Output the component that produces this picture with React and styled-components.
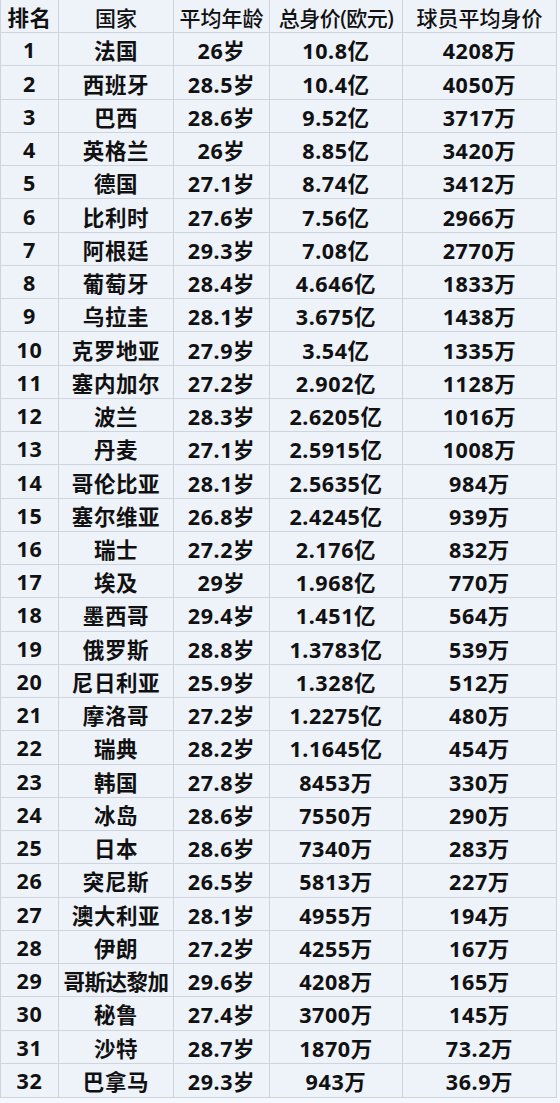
import React from 'react';
import styled, { createGlobalStyle } from 'styled-components';

// 2018 世界杯 32强 身价表

const GlobalStyle = createGlobalStyle`
  html, body {
    margin: 0;
    padding: 0;
    background: #f4f7fb;
  }
  body {
    font-family: "Noto Sans", "Noto Sans CJK SC", sans-serif;
  }
`;

const Table = styled.div`
  width: 557px;
  height: 1098px;
  box-sizing: border-box;
  border-left: 1px solid #cdd4de;
  border-bottom: 1px solid #cdd4de;
  background: #eef2f9;
  display: grid;
  grid-template-rows: repeat(33, 1fr);
`;

const Row = styled.div`
  display: grid;
  grid-template-columns: 58px 115px 96px 133px 154px;
`;

const Cell = styled.div`
  box-sizing: border-box;
  border-right: 1px solid #cdd4de;
  border-bottom: ${(p) => (p.$last ? 'none' : '1px solid #cdd4de')};
  display: flex;
  align-items: center;
  justify-content: center;
  font-size: ${(p) => (p.$head ? '21px' : '21.5px')};
  font-weight: ${(p) => (p.$head ? 500 : 700)};
  color: #111;
  white-space: nowrap;
  letter-spacing: ${(p) => (p.$tight ? '-0.5px' : p.$head ? '0' : '0.6px')};
  padding-top: 1px;
`;

const rows = [
  ['1', '法国', '26岁', '10.8亿', '4208万'],
  ['2', '西班牙', '28.5岁', '10.4亿', '4050万'],
  ['3', '巴西', '28.6岁', '9.52亿', '3717万'],
  ['4', '英格兰', '26岁', '8.85亿', '3420万'],
  ['5', '德国', '27.1岁', '8.74亿', '3412万'],
  ['6', '比利时', '27.6岁', '7.56亿', '2966万'],
  ['7', '阿根廷', '29.3岁', '7.08亿', '2770万'],
  ['8', '葡萄牙', '28.4岁', '4.646亿', '1833万'],
  ['9', '乌拉圭', '28.1岁', '3.675亿', '1438万'],
  ['10', '克罗地亚', '27.9岁', '3.54亿', '1335万'],
  ['11', '塞内加尔', '27.2岁', '2.902亿', '1128万'],
  ['12', '波兰', '28.3岁', '2.6205亿', '1016万'],
  ['13', '丹麦', '27.1岁', '2.5915亿', '1008万'],
  ['14', '哥伦比亚', '28.1岁', '2.5635亿', '984万'],
  ['15', '塞尔维亚', '26.8岁', '2.4245亿', '939万'],
  ['16', '瑞士', '27.2岁', '2.176亿', '832万'],
  ['17', '埃及', '29岁', '1.968亿', '770万'],
  ['18', '墨西哥', '29.4岁', '1.451亿', '564万'],
  ['19', '俄罗斯', '28.8岁', '1.3783亿', '539万'],
  ['20', '尼日利亚', '25.9岁', '1.328亿', '512万'],
  ['21', '摩洛哥', '27.2岁', '1.2275亿', '480万'],
  ['22', '瑞典', '28.2岁', '1.1645亿', '454万'],
  ['23', '韩国', '27.8岁', '8453万', '330万'],
  ['24', '冰岛', '28.6岁', '7550万', '290万'],
  ['25', '日本', '28.6岁', '7340万', '283万'],
  ['26', '突尼斯', '26.5岁', '5813万', '227万'],
  ['27', '澳大利亚', '28.1岁', '4955万', '194万'],
  ['28', '伊朗', '27.2岁', '4255万', '167万'],
  ['29', '哥斯达黎加', '29.6岁', '4208万', '165万'],
  ['30', '秘鲁', '27.4岁', '3700万', '145万'],
  ['31', '沙特', '28.7岁', '1870万', '73.2万'],
  ['32', '巴拿马', '29.3岁', '943万', '36.9万'],
];

const App = () => {
  return (
    <>
      <GlobalStyle />
      <Table>
        <Row>
          <Cell style={{ fontWeight: 700 }}>排名</Cell>
          <Cell $head>国家</Cell>
          <Cell $head>平均年龄</Cell>
          <Cell $head $tight>总身价(欧元)</Cell>
          <Cell $head>球员平均身价</Cell>
        </Row>
        {rows.map((r, i) => (
          <Row key={r[0]}>
            {r.map((v, j) => (
              <Cell key={j} $last={i === rows.length - 1} $tight={j === 1 && v.length > 4}>
                {v}
              </Cell>
            ))}
          </Row>
        ))}
      </Table>
    </>
  );
};

export default App;
